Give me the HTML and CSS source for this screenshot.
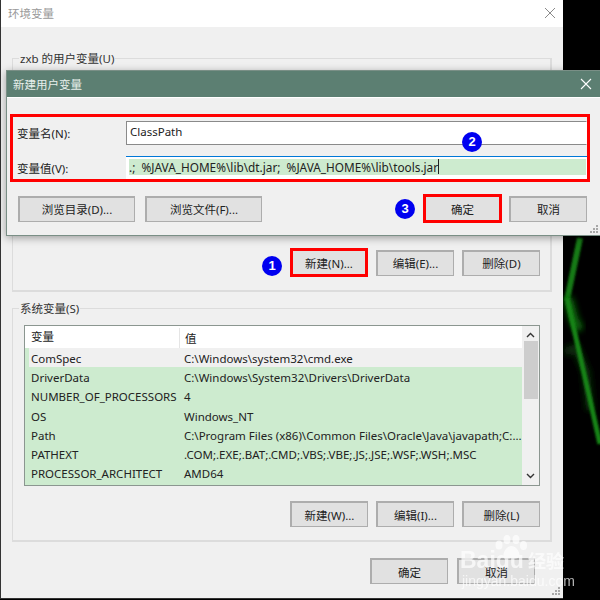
FILE: index.html
```html
<!DOCTYPE html>
<html lang="zh">
<head>
<meta charset="utf-8">
<title>环境变量</title>
<link rel="stylesheet" href="styles.css">
</head>
<body>
<div class="desktop">
  <svg class="wallpaper" width="38" height="600" viewBox="0 0 38 600" aria-hidden="true">
    <defs>
      <filter id="blur" x="-50%" y="-10%" width="200%" height="120%"><feGaussianBlur stdDeviation="1.300"/></filter>
      <filter id="blur2" x="-50%" y="-50%" width="200%" height="200%"><feGaussianBlur stdDeviation="3"/></filter>
      <filter id="blur3" x="-10%" y="-300%" width="120%" height="700%"><feGaussianBlur stdDeviation="1"/></filter>
    </defs>
    <path d="M3 352L14 348L24 372L28 410" fill="none" stroke="#0c2e0c" stroke-width="8" filter="url(#blur2)"/>
    <path d="M18 238L5 300" fill="none" stroke="#127a12" stroke-width="6" filter="url(#blur)"/>
    <path d="M6 298L12 320L18 330" fill="none" stroke="#0f6a0f" stroke-width="9" filter="url(#blur2)"/>
    <path d="M5 298L38 444" fill="none" stroke="#138413" stroke-width="5" filter="url(#blur)"/>
    <path d="M1 553H38" fill="none" stroke="#0a700a" stroke-width="4" filter="url(#blur3)"/>
  </svg>

  <section class="win">
    <header class="win-title">
      <span>环境变量</span>
      <svg width="12" height="12" viewBox="0 0 12 12"><path d="M1 1L11 11M11 1L1 11" stroke="#8a8a8a" fill="none"/></svg>
    </header>
    <div class="win-body">
      <div class="group group-user">
        <span class="legend">zxb 的用户变量(U)</span>
        <div class="btn-row">
          <span class="callout callout-1">1</span>
          <button class="btn btn-marked">新建(N)...</button>
          <button class="btn">编辑(E)...</button>
          <button class="btn">删除(D)</button>
        </div>
      </div>
      <div class="group group-sys">
        <span class="legend">系统变量(S)</span>
        <div class="list">
          <div class="list-main">
            <div class="row row-head"><span class="c1">变量</span><span class="c2">值</span></div>
            <div class="row row-first"><span class="c1">ComSpec</span><span class="c2">C:\Windows\system32\cmd.exe</span></div>
            <div class="row"><span class="c1">DriverData</span><span class="c2">C:\Windows\System32\Drivers\DriverData</span></div>
            <div class="row"><span class="c1">NUMBER_OF_PROCESSORS</span><span class="c2">4</span></div>
            <div class="row"><span class="c1">OS</span><span class="c2">Windows_NT</span></div>
            <div class="row"><span class="c1">Path</span><span class="c2">C:\Program Files (x86)\Common Files\Oracle\Java\javapath;C:...</span></div>
            <div class="row"><span class="c1">PATHEXT</span><span class="c2">.COM;.EXE;.BAT;.CMD;.VBS;.VBE;.JS;.JSE;.WSF;.WSH;.MSC</span></div>
            <div class="row"><span class="c1">PROCESSOR_ARCHITECT</span><span class="c2">AMD64</span></div>
          </div>
          <div class="scrollbar">
            <svg width="9" height="6" viewBox="0 0 9 6"><path d="M1 5L4.500 1.500L8 5" fill="none" stroke="#333" stroke-width="1.400"/></svg>
            <div class="thumb-track"><div class="thumb"></div></div>
            <svg width="9" height="6" viewBox="0 0 9 6"><path d="M1 1L4.500 4.500L8 1" fill="none" stroke="#333" stroke-width="1.400"/></svg>
          </div>
        </div>
        <div class="btn-row btn-row-sys">
          <button class="btn">新建(W)...</button>
          <button class="btn">编辑(I)...</button>
          <button class="btn">删除(L)</button>
        </div>
      </div>
      <div class="win-actions">
        <button class="btn">确定</button>
        <button class="btn">取消</button>
      </div>
    </div>
    <svg class="grip" width="8" height="8" viewBox="0 0 8 8"><path d="M6 0h2v2H6zM3 3h2v2H3zM6 3h2v2H6zM0 6h2v2H0zM3 6h2v2H3zM6 6h2v2H6z" fill="#a8a8a8"/></svg>
  </section>

  <section class="dialog">
    <header class="dialog-title">
      <span>新建用户变量</span>
      <svg width="12" height="12" viewBox="0 0 12 12"><path d="M1 1L11 11M11 1L1 11" stroke="#fff" stroke-width="1.100" fill="none"/></svg>
    </header>
    <div class="dialog-body">
      <div class="fields">
        <div class="field">
          <label>变量名(N):</label>
          <div class="input">ClassPath</div>
        </div>
        <div class="field">
          <label>变量值(V):</label>
          <div class="input input-active"><span class="sel">.;&nbsp; %JAVA_HOME%\lib\dt.jar;&nbsp; %JAVA_HOME%\lib\tools.jar<i class="caret"></i></span></div>
        </div>
        <span class="callout callout-2">2</span>
      </div>
      <div class="dialog-actions">
        <button class="btn btn-wide">浏览目录(D)...</button>
        <button class="btn btn-wide">浏览文件(F)...</button>
        <span class="spacer"></span>
        <span class="callout callout-3">3</span>
        <button class="btn btn-marked btn-ok">确定</button>
        <button class="btn btn-cancel">取消</button>
      </div>
    </div>
    <svg class="grip" width="8" height="8" viewBox="0 0 8 8"><path d="M6 0h2v2H6zM3 3h2v2H3zM6 3h2v2H6zM0 6h2v2H0zM3 6h2v2H3zM6 6h2v2H6z" fill="#a8a8a8"/></svg>
  </section>

  <div class="watermark">
    <svg class="paw" width="33" height="25" viewBox="0 0 33 25"><g fill="#fff"><ellipse cx="4" cy="10" rx="3.500" ry="4.500"/><ellipse cx="12" cy="4.500" rx="3.500" ry="4.500"/><ellipse cx="21" cy="4.500" rx="3.500" ry="4.500"/><ellipse cx="28.500" cy="10.500" rx="3.500" ry="4.500"/><path d="M16.500 11c4 0 8 5 8 9 0 4-4 4-8 3-4 1-8 1-8-3 0-4 4-9 8-9z"/></g></svg>
    <div class="wm-brand">Baidu<span class="wm-cn">经验</span></div>
    <div class="wm-url">jingyan.baidu.com</div>
  </div>
</div>
</body>
</html>
```

FILE: styles.css
```css
* { box-sizing: border-box; }
html, body { margin: 0; padding: 0; }
body { width: 600px; height: 600px; overflow: hidden; background: #000; font-family: "Noto Sans", "Noto Sans CJK SC", sans-serif; font-size: 11.5px; color: #222; }
.desktop { position: relative; width: 600px; height: 600px; background: #000; overflow: hidden; }
.wallpaper { position: absolute; left: 562px; top: 0; }

.win { position: absolute; left: 0; top: 0; width: 563px; height: 599px; background: #f0f0f0; border-left: 1px solid #333; border-bottom: 1px solid #333; display: flex; flex-direction: column; }
.win-title { height: 27px; flex: none; background: #fff; display: flex; align-items: center; justify-content: space-between; padding: 0 7px 2px 7px; color: #999; }
.win-body { flex: 1; padding: 31px 11px 0; display: flex; flex-direction: column; }

.group { width: 540px; height: 234px; padding: 0 10px 0 11px; border: 1px solid #dcdcdc; border-width: 1px 2px 2px 1px; position: relative; }
.legend { position: absolute; top: -8px; left: 6px; padding: 0 1px; line-height: 16px; background: #f0f0f0; color: #333; white-space: nowrap; }
.group-user { display: flex; flex-direction: column; justify-content: flex-end; padding-bottom: 13px; }
.group-sys { margin-top: 16px; padding-top: 16px; }

.btn-row { display: flex; justify-content: flex-end; align-items: center; gap: 8px; }
.btn-row-sys { margin-top: 15px; }
.btn { width: 78px; height: 26px; padding: 0; background: #e1e1e1; border: 1px solid #adadad; border-width: 2px 1px 1px 2px; font: inherit; color: #222; display: flex; align-items: center; justify-content: center; }
.btn-marked { border: 3px solid #f00; height: 29px; }

.callout { width: 20px; height: 20px; border-radius: 50%; background: #0000f0; color: #fff; font-weight: 700; font-size: 13px; line-height: 20px; text-align: center; font-family: "Liberation Sans", sans-serif; flex: none; }
.callout-1 { margin-top: 6px; }
.callout-2 { position: absolute; left: 449px; top: 15px; }
.callout-3 { margin-right: 8px; }

.list { border: 1px solid #8b9690; background: #cdebcf; height: 161px; display: flex; }
.list-main { flex: 1; min-width: 0; }
.row { height: 19.200px; padding-top: 2px; display: flex; align-items: center; line-height: 17px; white-space: nowrap; }
.row-head { height: 22px; background: #fff; }
.row-first { background: linear-gradient(to right, #cdebcf 4px, #f0f0f0 4px); }
.c1 { width: 155px; padding-left: 6px; flex: none; overflow: hidden; }
.c2 { padding-left: 4px; }
.row-head .c1 { border-right: 1px solid #e5e5e5; height: 100%; }
.row-head .c2 { padding-left: 5px; }
.scrollbar { width: 17px; flex: none; background: #f0f0f0; display: flex; flex-direction: column; align-items: center; justify-content: space-between; padding: 6px 0; }
.thumb-track { flex: 1; width: 100%; padding-top: 3px; }
.thumb { height: 58px; background: #cdcdcd; margin: 0 1px 0 2px; }

.win-actions { display: flex; justify-content: flex-end; gap: 9px; padding: 16px 17px 0 0; }

.grip { position: absolute; right: 2px; bottom: 2px; }
.win .grip { right: 3px; bottom: 3px; }

.dialog { position: absolute; left: 6px; top: 70px; width: 594px; height: 166px; background: #f0f0f0; box-shadow: 0 2px 8px rgba(0,0,0,.35); border: 1px solid #7a8f86; border-right: 0; display: flex; flex-direction: column; }
.dialog-title { height: 27px; flex: none; background: #5c7f72; color: #e8efec; display: flex; align-items: center; justify-content: space-between; padding: 0 8px 1px 6px; border-bottom: 1px solid #fff; }
.dialog-body { flex: 1; padding: 16px 0 0 3px; }
.fields { position: relative; width: 580px; height: 68px; border: 3px solid #f00; padding: 4px 0 0 4px; display: flex; flex-direction: column; gap: 11px; }
.field { display: flex; align-items: center; }
.field label { width: 109px; flex: none; }
.input { width: 461px; height: 24px; background: #fff; border: 1px solid #8a8a8a; border-right-color: #fff; padding-left: 3px; line-height: 20px; white-space: nowrap; overflow: hidden; }
.input-active { border: 0; border-top: 1px solid #0078d7; height: 23px; padding: 2px 1px 1px 3px; font-size: 11.800px; }
.sel { display: block; background: #cdebcf; height: 16px; line-height: 16px; }
.caret { display: inline-block; width: 1px; height: 15px; background: #222; vertical-align: top; }

.dialog-actions { display: flex; align-items: center; padding: 12px 0 0 8px; }
.btn-wide { width: 117px; margin-right: 10px; }
.spacer { flex: 1; }
.btn-ok { width: 79px; }
.btn-cancel { margin: 0 13px 0 7px; }

.watermark { position: absolute; left: 460px; top: 535px; width: 140px; height: 60px; color: #fff; opacity: .7; pointer-events: none; filter: blur(.4px); }
.paw { position: absolute; left: 35px; top: 0; }
.wm-brand { position: absolute; left: 0; top: 12px; font: 700 23px/26px "Liberation Sans", sans-serif; white-space: nowrap; }
.wm-cn { font: 700 18px/26px "Noto Sans CJK SC", sans-serif; margin-left: 4px; }
.wm-url { position: absolute; left: 2px; top: 38px; font: 14px/16px "Liberation Sans", sans-serif; white-space: nowrap; }
```
